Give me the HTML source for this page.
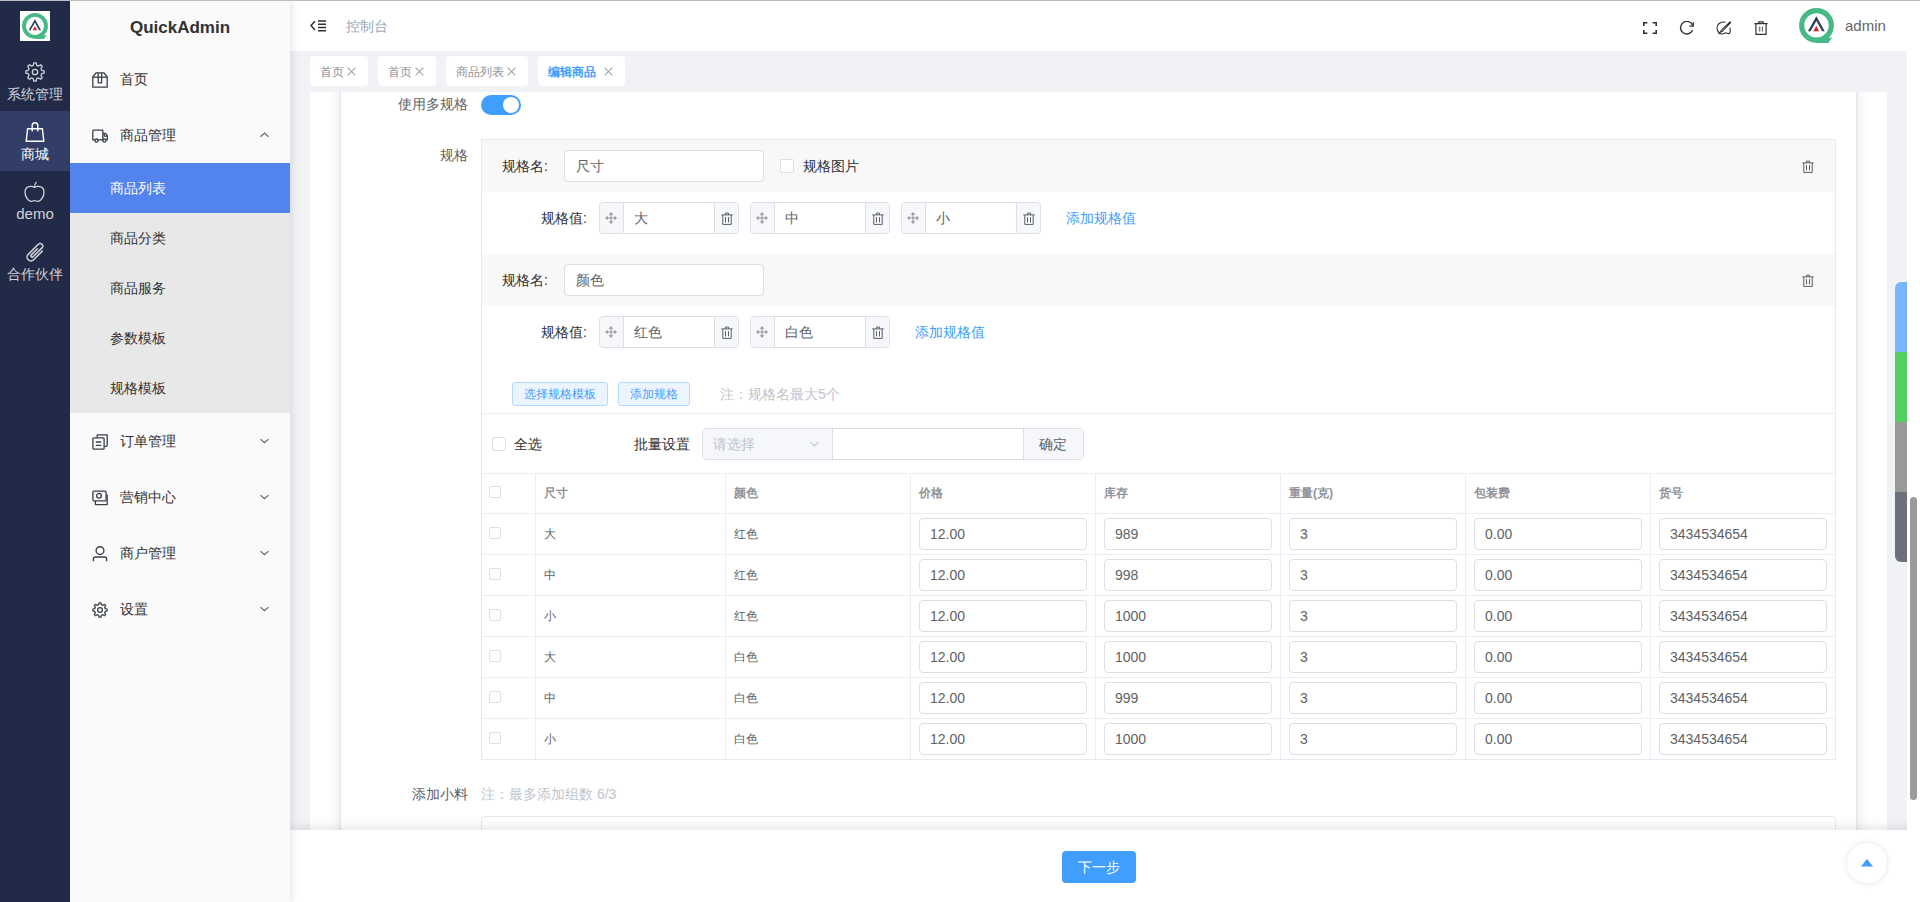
<!DOCTYPE html>
<html><head><meta charset="utf-8">
<style>*{box-sizing:border-box;margin:0;padding:0}
html,body{width:1920px;height:902px;overflow:hidden;background:#fff;font-family:"Liberation Sans",sans-serif;color:#606266;font-size:14px}
.a{position:absolute}
svg{display:block}
</style></head><body>
<div class="a" style="left:0px;top:0px;width:1920px;height:1px;z-index:50;background:#bcbcbc"></div>
<div class="a" style="left:0px;top:1px;width:70px;height:901px;z-index:20;background:#212a46"></div>
<div class="a" style="left:20px;top:11px;width:30px;height:30px;z-index:21;background:#fff"></div>
<div class="a" style="left:22px;top:13px;z-index:22"><svg width="26" height="26" viewBox="0 0 35 35"><circle cx="17.5" cy="17.4" r="14.8" fill="none" stroke="#46b985" stroke-width="5.2"/><path d="M17.5 29.8 L33.2 29.8 L29.2 35 L17.5 35Z" fill="#46b985"/><path d="M17.4 8.3 L25.7 23.2 L23.1 23.2 L17.4 12.9 L11.5 23.2 L8.9 23.2Z" fill="#2c3e5c"/><path d="M17.3 17.8 L20.1 23.2 L14.4 23.2Z" fill="#e02020"/></svg></div>
<div class="a" style="left:0px;top:111px;width:70px;height:60px;z-index:21;background:#323e68"></div>
<div class="a" style="left:25px;top:62px;z-index:22"><svg width="20" height="20" viewBox="0 0 20 20" fill="none" stroke="#d0d3da" stroke-width="1.3" stroke-linejoin="round"><path d="M8.28 3.30 L8.78 0.93 L11.22 0.93 L11.72 3.30 L13.52 4.04 L15.55 2.73 L17.27 4.45 L15.96 6.48 L16.70 8.28 L19.07 8.78 L19.07 11.22 L16.70 11.72 L15.96 13.52 L17.27 15.55 L15.55 17.27 L13.52 15.96 L11.72 16.70 L11.22 19.07 L8.78 19.07 L8.28 16.70 L6.48 15.96 L4.45 17.27 L2.73 15.55 L4.04 13.52 L3.30 11.72 L0.93 11.22 L0.93 8.78 L3.30 8.28 L4.04 6.48 L2.73 4.45 L4.45 2.73 L6.48 4.04Z"/><circle cx="10.0" cy="10.0" r="2.70"/></svg></div>
<div class="a" style="left:25px;top:122px;z-index:22"><svg width="20" height="20" viewBox="0 0 20 20" fill="none" stroke="#ffffff" stroke-width="1.4" stroke-linejoin="round"><path d="M2.6 6.8h14.8l1.4 12.4H1.2z"/><path d="M7.2 9.6V3.6a2.8 2.8 0 0 1 5.6 0v6"/></svg></div>
<div class="a" style="left:24px;top:181px;z-index:22"><svg width="21" height="21" viewBox="0 0 20 20" fill="none" stroke="#d0d3da" stroke-width="1.25" stroke-linejoin="round"><path d="M10 6.2C8 4.6 1 4.2 1 10.6c0 4.4 3 8.8 5.8 8.8 1.4 0 1.8-.7 3.2-.7s1.8.7 3.2.7c2.8 0 5.8-4.4 5.8-8.8 0-6.4-7-6-9-4.4z"/><path d="M10 6.2c0-2 .6-4 2-5.4"/></svg></div>
<div class="a" style="left:26px;top:242px;z-index:22"><svg width="20" height="20" viewBox="0 0 20 20" fill="none" stroke="#d0d3da" stroke-width="1.2" stroke-linecap="round"><g transform="rotate(45 10 10) translate(10 10) scale(1.28) translate(-10 -10)"><path d="M13 6V15.6a3 3 0 0 1-6 0V4.4a2 2 0 0 1 4 0V14.2a1 1 0 0 1-2 0V7.4"/></g></svg></div>
<div class="a" style="left:0px;top:85.0px;line-height:18px;font-size:14px;color:#d0d3da;white-space:nowrap;z-index:22;width:70px;text-align:center">系统管理</div>
<div class="a" style="left:0px;top:145.0px;line-height:18px;font-size:14px;color:#fff;white-space:nowrap;z-index:22;width:70px;text-align:center">商城</div>
<div class="a" style="left:0px;top:203.5px;line-height:19px;font-size:15px;color:#d0d3da;white-space:nowrap;z-index:22;width:70px;text-align:center">demo</div>
<div class="a" style="left:0px;top:265.0px;line-height:18px;font-size:14px;color:#d0d3da;white-space:nowrap;z-index:22;width:70px;text-align:center">合作伙伴</div>
<div class="a" style="left:70px;top:1px;width:220px;height:901px;z-index:15;background:#fafafa;box-shadow:2px 0 8px rgba(0,0,0,.10)"></div>
<div class="a" style="left:70px;top:16.5px;line-height:21px;font-size:17px;color:#303133;white-space:nowrap;z-index:16;width:220px;text-align:center;font-weight:bold">QuickAdmin</div>
<div class="a" style="left:70px;top:163px;width:220px;height:250px;z-index:16;background:#e8e8e8"></div>
<div class="a" style="left:70px;top:163px;width:220px;height:50px;z-index:16;background:#5383ec"></div>
<div class="a" style="left:92px;top:72px;z-index:17"><svg width="16" height="16" viewBox="0 0 16 16" fill="none" stroke="#3a4048" stroke-width="1.3" stroke-linejoin="round"><path d="M0.8 5L4 0.8h8L15.2 5V15.2H0.8z"/><path d="M0.8 5.2h14.4"/><path d="M6.2 0.8v10h3.4V0.8"/></svg></div>
<div class="a" style="left:120px;top:70.0px;line-height:18px;font-size:14px;color:#303133;white-space:nowrap;z-index:17;">首页</div>
<div class="a" style="left:92px;top:128px;z-index:17"><svg width="16" height="16" viewBox="0 0 16 16" fill="none" stroke="#3a4048" stroke-width="1.3" stroke-linejoin="round"><path d="M0.8 2.2h10v9.6M10.8 5.4h2.8l1.8 2.4v4h-1.4M3.2 11.8H0.8V2.2M5.8 11.8h5.6"/><circle cx="4.5" cy="12.6" r="1.6"/><circle cx="12.4" cy="12.6" r="1.6"/><path d="M12.2 5.6v2.6h3"/></svg></div>
<div class="a" style="left:120px;top:126.0px;line-height:18px;font-size:14px;color:#303133;white-space:nowrap;z-index:17;">商品管理</div>
<div class="a" style="left:260px;top:132px;z-index:17"><svg width="9" height="6" viewBox="0 0 9 5.5"><path d="M0.5 4.5L4.5 0.8L8.5 4.5" fill="none" stroke="#606266" stroke-width="1.1"/></svg></div>
<div class="a" style="left:92px;top:434px;z-index:17"><svg width="16" height="16" viewBox="0 0 16 16" fill="none" stroke="#3a4048" stroke-width="1.3" stroke-linejoin="round"><rect x="0.9" y="3.8" width="11.2" height="11.4" rx="1"/><path d="M5.2 3.6V0.9h10v10.4a1 1 0 0 1-1 1h-1.8"/><path d="M3.8 8h5.4M3.8 11.4h5.4"/></svg></div>
<div class="a" style="left:120px;top:432.0px;line-height:18px;font-size:14px;color:#303133;white-space:nowrap;z-index:17;">订单管理</div>
<div class="a" style="left:260px;top:438px;z-index:17"><svg width="9" height="6" viewBox="0 0 9 5.5"><path d="M0.5 0.8L4.5 4.5L8.5 0.8" fill="none" stroke="#606266" stroke-width="1.1"/></svg></div>
<div class="a" style="left:92px;top:490px;z-index:17"><svg width="16" height="16" viewBox="0 0 16 16" fill="none" stroke="#3a4048" stroke-width="1.3" stroke-linejoin="round"><rect x="0.9" y="1.2" width="13.2" height="9.6" rx="1"/><path d="M3.4 11v3.6h11.8V5.2h-1"/><circle cx="7" cy="5.8" r="2.4"/></svg></div>
<div class="a" style="left:120px;top:488.0px;line-height:18px;font-size:14px;color:#303133;white-space:nowrap;z-index:17;">营销中心</div>
<div class="a" style="left:260px;top:494px;z-index:17"><svg width="9" height="6" viewBox="0 0 9 5.5"><path d="M0.5 0.8L4.5 4.5L8.5 0.8" fill="none" stroke="#606266" stroke-width="1.1"/></svg></div>
<div class="a" style="left:92px;top:546px;z-index:17"><svg width="16" height="16" viewBox="0 0 16 16" fill="none" stroke="#3a4048" stroke-width="1.4"><circle cx="8" cy="4.6" r="3.9"/><path d="M1.4 15.2v-2.2a2 2 0 0 1 2-2h9.2a2 2 0 0 1 2 2v2.2"/></svg></div>
<div class="a" style="left:120px;top:544.0px;line-height:18px;font-size:14px;color:#303133;white-space:nowrap;z-index:17;">商户管理</div>
<div class="a" style="left:260px;top:550px;z-index:17"><svg width="9" height="6" viewBox="0 0 9 5.5"><path d="M0.5 0.8L4.5 4.5L8.5 0.8" fill="none" stroke="#606266" stroke-width="1.1"/></svg></div>
<div class="a" style="left:92px;top:602px;z-index:17"><svg width="16" height="16" viewBox="0 0 16 16" fill="none" stroke="#3a4048" stroke-width="1.3" stroke-linejoin="round"><path d="M6.65 2.73 L7.05 0.91 L8.95 0.91 L9.35 2.73 L10.77 3.32 L12.34 2.32 L13.68 3.66 L12.68 5.23 L13.27 6.65 L15.09 7.05 L15.09 8.95 L13.27 9.35 L12.68 10.77 L13.68 12.34 L12.34 13.68 L10.77 12.68 L9.35 13.27 L8.95 15.09 L7.05 15.09 L6.65 13.27 L5.23 12.68 L3.66 13.68 L2.32 12.34 L3.32 10.77 L2.73 9.35 L0.91 8.95 L0.91 7.05 L2.73 6.65 L3.32 5.23 L2.32 3.66 L3.66 2.32 L5.23 3.32Z"/><circle cx="8.0" cy="8.0" r="2.40"/></svg></div>
<div class="a" style="left:120px;top:600.0px;line-height:18px;font-size:14px;color:#303133;white-space:nowrap;z-index:17;">设置</div>
<div class="a" style="left:260px;top:606px;z-index:17"><svg width="9" height="6" viewBox="0 0 9 5.5"><path d="M0.5 0.8L4.5 4.5L8.5 0.8" fill="none" stroke="#606266" stroke-width="1.1"/></svg></div>
<div class="a" style="left:110px;top:179.0px;line-height:18px;font-size:14px;color:#fff;white-space:nowrap;z-index:17;">商品列表</div>
<div class="a" style="left:110px;top:229.0px;line-height:18px;font-size:14px;color:#303133;white-space:nowrap;z-index:17;">商品分类</div>
<div class="a" style="left:110px;top:279.0px;line-height:18px;font-size:14px;color:#303133;white-space:nowrap;z-index:17;">商品服务</div>
<div class="a" style="left:110px;top:329.0px;line-height:18px;font-size:14px;color:#303133;white-space:nowrap;z-index:17;">参数模板</div>
<div class="a" style="left:110px;top:379.0px;line-height:18px;font-size:14px;color:#303133;white-space:nowrap;z-index:17;">规格模板</div>
<div class="a" style="left:290px;top:1px;width:1630px;height:50px;z-index:10;background:#fff"></div>
<div class="a" style="left:310px;top:20px;z-index:11"><svg width="17" height="12" viewBox="0 0 17 12" fill="none" stroke="#303133" stroke-width="1.5"><path d="M5 1.2L1 5.6L5 10"/><path d="M8 1h8M8 4.2h8M8 7.4h8M8 10.8h8"/></svg></div>
<div class="a" style="left:346px;top:17.0px;line-height:18px;font-size:14px;color:#97a8be;white-space:nowrap;z-index:11;">控制台</div>
<div class="a" style="left:1643px;top:22px;z-index:11"><svg width="14" height="12" viewBox="0 0 14 12" fill="none" stroke="#303133" stroke-width="1.6"><path d="M0.8 4V0.8h3.6M9.6 0.8h3.6V4M13.2 8v3.2H9.6M4.4 11.2H0.8V8"/></svg></div>
<div class="a" style="left:1679px;top:21px;z-index:11"><svg width="15" height="14" viewBox="0 0 15 14" fill="none" stroke="#303133" stroke-width="1.4"><path d="M13.8 4.6A6.3 6.3 0 1 0 13.6 9.2"/><path d="M14.2 1.2v3.9h-3.9" stroke-linejoin="miter"/></svg></div>
<div class="a" style="left:1716px;top:21px;z-index:11"><svg width="15" height="14" viewBox="0 0 15 14" fill="none" stroke="#303133" stroke-width="1.1" stroke-linejoin="round"><path d="M9.6 1.3C8.9 1.1 8.2 1 7.4 1 3.8 1 1 3.6 1 7c0 3.4 2.6 6 5.6 6 1.8 0 2.2-1.2 3.2-1.2 1.1 0 1.5.8 2.6.8 1.3 0 1.9-1.6 1.9-3.2 0-1-.3-1.9-.7-2.6"/><path d="M14 0.9L5.2 9.4l-.5 1.6 1.6-.5L14.6 1.5z"/><path d="M4.6 10.6L2.6 13.2"/></svg></div>
<div class="a" style="left:1754px;top:21px;z-index:11"><svg width="14" height="14" viewBox="0 0 14 14" fill="none" stroke="#303133" stroke-width="1.2"><path d="M0.4 2.6h13.2M4.8 2.4V0.9h4.4v1.5M1.9 2.8v10.5h10.2V2.8"/><path d="M5.6 5.4v5M8.4 5.4v5" stroke="#777" stroke-width="1.4"/></svg></div>
<div class="a" style="left:1799px;top:8px;z-index:11"><svg width="35" height="35" viewBox="0 0 35 35"><circle cx="17.5" cy="17.4" r="14.8" fill="none" stroke="#46b985" stroke-width="5.2"/><path d="M17.5 29.8 L33.2 29.8 L29.2 35 L17.5 35Z" fill="#46b985"/><path d="M17.4 8.3 L25.7 23.2 L23.1 23.2 L17.4 12.9 L11.5 23.2 L8.9 23.2Z" fill="#2c3e5c"/><path d="M17.3 17.8 L20.1 23.2 L14.4 23.2Z" fill="#e02020"/></svg></div>
<div class="a" style="left:1845px;top:15.5px;line-height:19px;font-size:15px;color:#666;white-space:nowrap;z-index:11;">admin</div>
<div class="a" style="left:290px;top:51px;width:1630px;height:41px;z-index:9;background:#f0f2f5"></div>
<div class="a" style="left:310px;top:56px;width:58px;height:30px;z-index:9;background:#fff;border-radius:4px"></div>
<div class="a" style="left:320px;top:64.0px;line-height:16px;font-size:12px;color:#909399;white-space:nowrap;z-index:9;">首页</div>
<div class="a" style="left:347px;top:67px;z-index:9"><svg width="9" height="9" viewBox="0 0 9 9"><path d="M0.6 0.6L8.4 8.4M8.4 0.6L0.6 8.4" stroke="#a0a3a9" stroke-width="1.1"/></svg></div>
<div class="a" style="left:378px;top:56px;width:58px;height:30px;z-index:9;background:#fff;border-radius:4px"></div>
<div class="a" style="left:388px;top:64.0px;line-height:16px;font-size:12px;color:#909399;white-space:nowrap;z-index:9;">首页</div>
<div class="a" style="left:415px;top:67px;z-index:9"><svg width="9" height="9" viewBox="0 0 9 9"><path d="M0.6 0.6L8.4 8.4M8.4 0.6L0.6 8.4" stroke="#a0a3a9" stroke-width="1.1"/></svg></div>
<div class="a" style="left:446px;top:56px;width:82px;height:30px;z-index:9;background:#fff;border-radius:4px"></div>
<div class="a" style="left:456px;top:64.0px;line-height:16px;font-size:12px;color:#909399;white-space:nowrap;z-index:9;">商品列表</div>
<div class="a" style="left:507px;top:67px;z-index:9"><svg width="9" height="9" viewBox="0 0 9 9"><path d="M0.6 0.6L8.4 8.4M8.4 0.6L0.6 8.4" stroke="#a0a3a9" stroke-width="1.1"/></svg></div>
<div class="a" style="left:538px;top:56px;width:87px;height:30px;z-index:9;background:#fff;border-radius:4px"></div>
<div class="a" style="left:548px;top:64.0px;line-height:16px;font-size:12px;color:#409eff;white-space:nowrap;z-index:9;font-weight:bold">编辑商品</div>
<div class="a" style="left:604px;top:67px;z-index:9"><svg width="9" height="9" viewBox="0 0 9 9"><path d="M0.6 0.6L8.4 8.4M8.4 0.6L0.6 8.4" stroke="#a0a3a9" stroke-width="1.1"/></svg></div>
<div class="a" style="left:290px;top:92px;width:1617px;height:738px;z-index:1;background:#f0f2f5"></div>
<div class="a" style="left:310px;top:92px;width:1577px;height:738px;z-index:2;background:#fff;overflow:hidden"></div>
<div class="a" style="left:310px;top:92px;width:1577px;height:738px;overflow:hidden;z-index:2"><div class="a" style="left:30px;top:-10px;width:1517px;height:800px;background:#fff;border:1px solid #e4e6ef;box-shadow:0 2px 12px rgba(0,0,0,.11)"></div></div>
<div class="a" style="left:1907px;top:51px;width:13px;height:779px;z-index:13;background:#fff"></div>
<div class="a" style="left:1910px;top:497px;width:7px;height:303px;z-index:13;background:#9b9b9b;border-radius:4px"></div>
<div class="a" style="left:1895px;top:282px;width:12px;height:70px;z-index:13;background:#79b4ff;border-top-left-radius:6px"></div>
<div class="a" style="left:1895px;top:352px;width:12px;height:70px;z-index:13;background:#54d062"></div>
<div class="a" style="left:1895px;top:422px;width:12px;height:70px;z-index:13;background:#999"></div>
<div class="a" style="left:1895px;top:492px;width:12px;height:70px;z-index:13;background:#6c7079;border-bottom-left-radius:6px"></div>
<div class="a" style="left:290px;top:830px;width:1630px;height:72px;z-index:12;background:#fff;box-shadow:0 -3px 10px rgba(0,0,0,.10)"></div>
<div class="a" style="left:1062px;top:851px;width:74px;height:32px;z-index:13;background:#409eff;border-radius:4px"></div>
<div class="a" style="left:1062px;top:858.0px;line-height:18px;font-size:14px;color:#fff;white-space:nowrap;z-index:14;width:74px;text-align:center">下一步</div>
<div class="a" style="left:1847px;top:843px;width:40px;height:40px;z-index:13;background:#fff;border-radius:50%;box-shadow:0 0 6px rgba(0,0,0,.12)"></div>
<div class="a" style="left:1861px;top:859px;z-index:14"><svg width="12" height="8" viewBox="0 0 12 8"><path d="M6 0L12 7.5H0Z" fill="#409eff"/></svg></div>
<div class="a" style="left:268px;width:200px;text-align:right;top:95.0px;line-height:18px;font-size:14px;color:#606266;white-space:nowrap;z-index:3;">使用多规格</div>
<div class="a" style="left:481px;top:95px;width:40px;height:20px;z-index:3;background:#409eff;border-radius:10px"></div>
<div class="a" style="left:503px;top:97px;width:16px;height:16px;z-index:3;background:#fff;border-radius:50%"></div>
<div class="a" style="left:268px;width:200px;text-align:right;top:146.0px;line-height:18px;font-size:14px;color:#606266;white-space:nowrap;z-index:3;">规格</div>
<div class="a" style="left:481px;top:139px;width:1355px;height:621px;z-index:3;border:1px solid #e8eaf1"></div>
<div class="a" style="left:482px;top:140px;width:1353px;height:52px;z-index:3;background:#f8f8f9"></div>
<div class="a" style="left:482px;top:254px;width:1353px;height:52px;z-index:3;background:#f8f8f9"></div>
<div class="a" style="left:502px;top:157.0px;line-height:18px;font-size:14px;color:#303133;white-space:nowrap;z-index:3;">规格名:</div>
<div class="a" style="left:564px;top:150px;width:200px;height:32px;z-index:3;background:#fff;border:1px solid #dcdfe6;border-radius:4px"></div>
<div class="a" style="left:576px;top:157.0px;line-height:18px;font-size:14px;color:#606266;white-space:nowrap;z-index:3;">尺寸</div>
<div class="a" style="left:1802px;top:160px;z-index:3"><svg width="12" height="13" viewBox="0 0 12 13" fill="none" stroke="#5a5e66" stroke-width="1.0" stroke-linejoin="miter"><path d="M0.3 2.9h11.4M4.5 2.8V1.1h3v1.7M1.8 3v9.4h8.4V3"/><path d="M4.5 5.2v5.2M7.5 5.2v5.2" stroke-width="1"/></svg></div>
<div class="a" style="left:780px;top:159px;width:14px;height:14px;z-index:3;border:1px solid #dcdfe6;border-radius:2px;background:#fff"></div>
<div class="a" style="left:803px;top:157.0px;line-height:18px;font-size:14px;color:#303133;white-space:nowrap;z-index:3;">规格图片</div>
<div class="a" style="left:541px;top:209.0px;line-height:18px;font-size:14px;color:#303133;white-space:nowrap;z-index:3;">规格值:</div>
<div class="a" style="left:599px;top:202px;width:140px;height:32px;z-index:3;background:#fff;border:1px solid #dcdfe6;border-radius:4px;overflow:hidden"></div>
<div class="a" style="left:600px;top:203px;width:24px;height:30px;z-index:3;background:#f5f7fa;border-right:1px solid #dcdfe6;border-radius:3px 0 0 3px"></div>
<div class="a" style="left:714px;top:203px;width:24px;height:30px;z-index:3;background:#f5f7fa;border-left:1px solid #dcdfe6;border-radius:0 3px 3px 0"></div>
<div class="a" style="left:605px;top:212px;z-index:3"><svg width="12" height="12" viewBox="0 0 12 12"><g stroke="#999" stroke-width="1.1" fill="none"><path d="M6 2v8M2 6h8"/></g><g fill="#999"><path d="M6 0L8.3 2.7H3.7Z"/><path d="M6 12L8.3 9.3H3.7Z"/><path d="M0 6L2.7 3.7V8.3Z"/><path d="M12 6L9.3 3.7V8.3Z"/></g></svg></div>
<div class="a" style="left:721px;top:212px;z-index:3"><svg width="12" height="13" viewBox="0 0 12 13" fill="none" stroke="#5a5e66" stroke-width="1.0" stroke-linejoin="miter"><path d="M0.3 2.9h11.4M4.5 2.8V1.1h3v1.7M1.8 3v9.4h8.4V3"/><path d="M4.5 5.2v5.2M7.5 5.2v5.2" stroke-width="1"/></svg></div>
<div class="a" style="left:634px;top:209.0px;line-height:18px;font-size:14px;color:#606266;white-space:nowrap;z-index:3;">大</div>
<div class="a" style="left:750px;top:202px;width:140px;height:32px;z-index:3;background:#fff;border:1px solid #dcdfe6;border-radius:4px;overflow:hidden"></div>
<div class="a" style="left:751px;top:203px;width:24px;height:30px;z-index:3;background:#f5f7fa;border-right:1px solid #dcdfe6;border-radius:3px 0 0 3px"></div>
<div class="a" style="left:865px;top:203px;width:24px;height:30px;z-index:3;background:#f5f7fa;border-left:1px solid #dcdfe6;border-radius:0 3px 3px 0"></div>
<div class="a" style="left:756px;top:212px;z-index:3"><svg width="12" height="12" viewBox="0 0 12 12"><g stroke="#999" stroke-width="1.1" fill="none"><path d="M6 2v8M2 6h8"/></g><g fill="#999"><path d="M6 0L8.3 2.7H3.7Z"/><path d="M6 12L8.3 9.3H3.7Z"/><path d="M0 6L2.7 3.7V8.3Z"/><path d="M12 6L9.3 3.7V8.3Z"/></g></svg></div>
<div class="a" style="left:872px;top:212px;z-index:3"><svg width="12" height="13" viewBox="0 0 12 13" fill="none" stroke="#5a5e66" stroke-width="1.0" stroke-linejoin="miter"><path d="M0.3 2.9h11.4M4.5 2.8V1.1h3v1.7M1.8 3v9.4h8.4V3"/><path d="M4.5 5.2v5.2M7.5 5.2v5.2" stroke-width="1"/></svg></div>
<div class="a" style="left:785px;top:209.0px;line-height:18px;font-size:14px;color:#606266;white-space:nowrap;z-index:3;">中</div>
<div class="a" style="left:901px;top:202px;width:140px;height:32px;z-index:3;background:#fff;border:1px solid #dcdfe6;border-radius:4px;overflow:hidden"></div>
<div class="a" style="left:902px;top:203px;width:24px;height:30px;z-index:3;background:#f5f7fa;border-right:1px solid #dcdfe6;border-radius:3px 0 0 3px"></div>
<div class="a" style="left:1016px;top:203px;width:24px;height:30px;z-index:3;background:#f5f7fa;border-left:1px solid #dcdfe6;border-radius:0 3px 3px 0"></div>
<div class="a" style="left:907px;top:212px;z-index:3"><svg width="12" height="12" viewBox="0 0 12 12"><g stroke="#999" stroke-width="1.1" fill="none"><path d="M6 2v8M2 6h8"/></g><g fill="#999"><path d="M6 0L8.3 2.7H3.7Z"/><path d="M6 12L8.3 9.3H3.7Z"/><path d="M0 6L2.7 3.7V8.3Z"/><path d="M12 6L9.3 3.7V8.3Z"/></g></svg></div>
<div class="a" style="left:1023px;top:212px;z-index:3"><svg width="12" height="13" viewBox="0 0 12 13" fill="none" stroke="#5a5e66" stroke-width="1.0" stroke-linejoin="miter"><path d="M0.3 2.9h11.4M4.5 2.8V1.1h3v1.7M1.8 3v9.4h8.4V3"/><path d="M4.5 5.2v5.2M7.5 5.2v5.2" stroke-width="1"/></svg></div>
<div class="a" style="left:936px;top:209.0px;line-height:18px;font-size:14px;color:#606266;white-space:nowrap;z-index:3;">小</div>
<div class="a" style="left:1066px;top:209.0px;line-height:18px;font-size:14px;color:#409eff;white-space:nowrap;z-index:3;">添加规格值</div>
<div class="a" style="left:502px;top:271.0px;line-height:18px;font-size:14px;color:#303133;white-space:nowrap;z-index:3;">规格名:</div>
<div class="a" style="left:564px;top:264px;width:200px;height:32px;z-index:3;background:#fff;border:1px solid #dcdfe6;border-radius:4px"></div>
<div class="a" style="left:576px;top:271.0px;line-height:18px;font-size:14px;color:#606266;white-space:nowrap;z-index:3;">颜色</div>
<div class="a" style="left:1802px;top:274px;z-index:3"><svg width="12" height="13" viewBox="0 0 12 13" fill="none" stroke="#5a5e66" stroke-width="1.0" stroke-linejoin="miter"><path d="M0.3 2.9h11.4M4.5 2.8V1.1h3v1.7M1.8 3v9.4h8.4V3"/><path d="M4.5 5.2v5.2M7.5 5.2v5.2" stroke-width="1"/></svg></div>
<div class="a" style="left:541px;top:323.0px;line-height:18px;font-size:14px;color:#303133;white-space:nowrap;z-index:3;">规格值:</div>
<div class="a" style="left:599px;top:316px;width:140px;height:32px;z-index:3;background:#fff;border:1px solid #dcdfe6;border-radius:4px;overflow:hidden"></div>
<div class="a" style="left:600px;top:317px;width:24px;height:30px;z-index:3;background:#f5f7fa;border-right:1px solid #dcdfe6;border-radius:3px 0 0 3px"></div>
<div class="a" style="left:714px;top:317px;width:24px;height:30px;z-index:3;background:#f5f7fa;border-left:1px solid #dcdfe6;border-radius:0 3px 3px 0"></div>
<div class="a" style="left:605px;top:326px;z-index:3"><svg width="12" height="12" viewBox="0 0 12 12"><g stroke="#999" stroke-width="1.1" fill="none"><path d="M6 2v8M2 6h8"/></g><g fill="#999"><path d="M6 0L8.3 2.7H3.7Z"/><path d="M6 12L8.3 9.3H3.7Z"/><path d="M0 6L2.7 3.7V8.3Z"/><path d="M12 6L9.3 3.7V8.3Z"/></g></svg></div>
<div class="a" style="left:721px;top:326px;z-index:3"><svg width="12" height="13" viewBox="0 0 12 13" fill="none" stroke="#5a5e66" stroke-width="1.0" stroke-linejoin="miter"><path d="M0.3 2.9h11.4M4.5 2.8V1.1h3v1.7M1.8 3v9.4h8.4V3"/><path d="M4.5 5.2v5.2M7.5 5.2v5.2" stroke-width="1"/></svg></div>
<div class="a" style="left:634px;top:323.0px;line-height:18px;font-size:14px;color:#606266;white-space:nowrap;z-index:3;">红色</div>
<div class="a" style="left:750px;top:316px;width:140px;height:32px;z-index:3;background:#fff;border:1px solid #dcdfe6;border-radius:4px;overflow:hidden"></div>
<div class="a" style="left:751px;top:317px;width:24px;height:30px;z-index:3;background:#f5f7fa;border-right:1px solid #dcdfe6;border-radius:3px 0 0 3px"></div>
<div class="a" style="left:865px;top:317px;width:24px;height:30px;z-index:3;background:#f5f7fa;border-left:1px solid #dcdfe6;border-radius:0 3px 3px 0"></div>
<div class="a" style="left:756px;top:326px;z-index:3"><svg width="12" height="12" viewBox="0 0 12 12"><g stroke="#999" stroke-width="1.1" fill="none"><path d="M6 2v8M2 6h8"/></g><g fill="#999"><path d="M6 0L8.3 2.7H3.7Z"/><path d="M6 12L8.3 9.3H3.7Z"/><path d="M0 6L2.7 3.7V8.3Z"/><path d="M12 6L9.3 3.7V8.3Z"/></g></svg></div>
<div class="a" style="left:872px;top:326px;z-index:3"><svg width="12" height="13" viewBox="0 0 12 13" fill="none" stroke="#5a5e66" stroke-width="1.0" stroke-linejoin="miter"><path d="M0.3 2.9h11.4M4.5 2.8V1.1h3v1.7M1.8 3v9.4h8.4V3"/><path d="M4.5 5.2v5.2M7.5 5.2v5.2" stroke-width="1"/></svg></div>
<div class="a" style="left:785px;top:323.0px;line-height:18px;font-size:14px;color:#606266;white-space:nowrap;z-index:3;">白色</div>
<div class="a" style="left:915px;top:323.0px;line-height:18px;font-size:14px;color:#409eff;white-space:nowrap;z-index:3;">添加规格值</div>
<div class="a" style="left:512px;top:382px;width:96px;height:24px;z-index:3;background:#ecf5ff;border:1px solid #b3d8ff;border-radius:3px"></div>
<div class="a" style="left:512px;top:386.0px;line-height:16px;font-size:12px;color:#409eff;white-space:nowrap;z-index:3;width:96px;text-align:center">选择规格模板</div>
<div class="a" style="left:618px;top:382px;width:72px;height:24px;z-index:3;background:#ecf5ff;border:1px solid #b3d8ff;border-radius:3px"></div>
<div class="a" style="left:618px;top:386.0px;line-height:16px;font-size:12px;color:#409eff;white-space:nowrap;z-index:3;width:72px;text-align:center">添加规格</div>
<div class="a" style="left:720px;top:385.0px;line-height:18px;font-size:14px;color:#c0c4cc;white-space:nowrap;z-index:3;">注：规格名最大5个</div>
<div class="a" style="left:482px;top:413px;width:1353px;height:1px;z-index:3;background:#ebeef5"></div>
<div class="a" style="left:492px;top:437px;width:14px;height:14px;z-index:3;border:1px solid #dcdfe6;border-radius:2px;background:#fff"></div>
<div class="a" style="left:514px;top:435.0px;line-height:18px;font-size:14px;color:#303133;white-space:nowrap;z-index:3;">全选</div>
<div class="a" style="left:634px;top:435.0px;line-height:18px;font-size:14px;color:#303133;white-space:nowrap;z-index:3;">批量设置</div>
<div class="a" style="left:702px;top:428px;width:382px;height:32px;z-index:3;border:1px solid #dcdfe6;border-radius:4px;background:#fff;overflow:hidden"></div>
<div class="a" style="left:703px;top:429px;width:130px;height:30px;z-index:3;background:#f5f7fa;border-right:1px solid #dcdfe6"></div>
<div class="a" style="left:1023px;top:429px;width:60px;height:30px;z-index:3;background:#f5f7fa;border-left:1px solid #dcdfe6"></div>
<div class="a" style="left:713px;top:435.0px;line-height:18px;font-size:14px;color:#c0c4cc;white-space:nowrap;z-index:3;">请选择</div>
<div class="a" style="left:810px;top:441px;z-index:3"><svg width="9" height="6" viewBox="0 0 9 5.5"><path d="M0.5 0.8L4.5 4.5L8.5 0.8" fill="none" stroke="#c0c4cc" stroke-width="1.1"/></svg></div>
<div class="a" style="left:1023px;top:435.0px;line-height:18px;font-size:14px;color:#606266;white-space:nowrap;z-index:3;width:60px;text-align:center">确定</div>
<div class="a" style="left:482px;top:473px;width:1353px;height:1px;z-index:3;background:#ebeef5"></div>
<div class="a" style="left:544px;top:485.0px;line-height:16px;font-size:12px;color:#909399;white-space:nowrap;z-index:3;font-weight:bold">尺寸</div>
<div class="a" style="left:734px;top:485.0px;line-height:16px;font-size:12px;color:#909399;white-space:nowrap;z-index:3;font-weight:bold">颜色</div>
<div class="a" style="left:919px;top:485.0px;line-height:16px;font-size:12px;color:#909399;white-space:nowrap;z-index:3;font-weight:bold">价格</div>
<div class="a" style="left:1104px;top:485.0px;line-height:16px;font-size:12px;color:#909399;white-space:nowrap;z-index:3;font-weight:bold">库存</div>
<div class="a" style="left:1289px;top:485.0px;line-height:16px;font-size:12px;color:#909399;white-space:nowrap;z-index:3;font-weight:bold">重量(克)</div>
<div class="a" style="left:1474px;top:485.0px;line-height:16px;font-size:12px;color:#909399;white-space:nowrap;z-index:3;font-weight:bold">包装费</div>
<div class="a" style="left:1659px;top:485.0px;line-height:16px;font-size:12px;color:#909399;white-space:nowrap;z-index:3;font-weight:bold">货号</div>
<div class="a" style="left:535px;top:473px;width:1px;height:286px;z-index:3;background:#ebeef5"></div>
<div class="a" style="left:725px;top:473px;width:1px;height:286px;z-index:3;background:#ebeef5"></div>
<div class="a" style="left:910px;top:473px;width:1px;height:286px;z-index:3;background:#ebeef5"></div>
<div class="a" style="left:1095px;top:473px;width:1px;height:286px;z-index:3;background:#ebeef5"></div>
<div class="a" style="left:1280px;top:473px;width:1px;height:286px;z-index:3;background:#ebeef5"></div>
<div class="a" style="left:1465px;top:473px;width:1px;height:286px;z-index:3;background:#ebeef5"></div>
<div class="a" style="left:1650px;top:473px;width:1px;height:286px;z-index:3;background:#ebeef5"></div>
<div class="a" style="left:489px;top:486px;width:12px;height:12px;z-index:3;border:1px solid #dcdfe6;border-radius:2px;background:#fff"></div>
<div class="a" style="left:482px;top:513px;width:1353px;height:1px;z-index:3;background:#ebeef5"></div>
<div class="a" style="left:489px;top:527px;width:12px;height:12px;z-index:3;border:1px solid #dcdfe6;border-radius:2px;background:#fff"></div>
<div class="a" style="left:544px;top:526.0px;line-height:16px;font-size:12px;color:#606266;white-space:nowrap;z-index:3;">大</div>
<div class="a" style="left:734px;top:526.0px;line-height:16px;font-size:12px;color:#606266;white-space:nowrap;z-index:3;">红色</div>
<div class="a" style="left:919px;top:518px;width:168px;height:32px;z-index:3;background:#fff;border:1px solid #dcdfe6;border-radius:4px"></div>
<div class="a" style="left:930px;top:525.0px;line-height:18px;font-size:14px;color:#606266;white-space:nowrap;z-index:3;">12.00</div>
<div class="a" style="left:1104px;top:518px;width:168px;height:32px;z-index:3;background:#fff;border:1px solid #dcdfe6;border-radius:4px"></div>
<div class="a" style="left:1115px;top:525.0px;line-height:18px;font-size:14px;color:#606266;white-space:nowrap;z-index:3;">989</div>
<div class="a" style="left:1289px;top:518px;width:168px;height:32px;z-index:3;background:#fff;border:1px solid #dcdfe6;border-radius:4px"></div>
<div class="a" style="left:1300px;top:525.0px;line-height:18px;font-size:14px;color:#606266;white-space:nowrap;z-index:3;">3</div>
<div class="a" style="left:1474px;top:518px;width:168px;height:32px;z-index:3;background:#fff;border:1px solid #dcdfe6;border-radius:4px"></div>
<div class="a" style="left:1485px;top:525.0px;line-height:18px;font-size:14px;color:#606266;white-space:nowrap;z-index:3;">0.00</div>
<div class="a" style="left:1659px;top:518px;width:168px;height:32px;z-index:3;background:#fff;border:1px solid #dcdfe6;border-radius:4px"></div>
<div class="a" style="left:1670px;top:525.0px;line-height:18px;font-size:14px;color:#606266;white-space:nowrap;z-index:3;">3434534654</div>
<div class="a" style="left:482px;top:554px;width:1353px;height:1px;z-index:3;background:#ebeef5"></div>
<div class="a" style="left:489px;top:568px;width:12px;height:12px;z-index:3;border:1px solid #dcdfe6;border-radius:2px;background:#fff"></div>
<div class="a" style="left:544px;top:567.0px;line-height:16px;font-size:12px;color:#606266;white-space:nowrap;z-index:3;">中</div>
<div class="a" style="left:734px;top:567.0px;line-height:16px;font-size:12px;color:#606266;white-space:nowrap;z-index:3;">红色</div>
<div class="a" style="left:919px;top:559px;width:168px;height:32px;z-index:3;background:#fff;border:1px solid #dcdfe6;border-radius:4px"></div>
<div class="a" style="left:930px;top:566.0px;line-height:18px;font-size:14px;color:#606266;white-space:nowrap;z-index:3;">12.00</div>
<div class="a" style="left:1104px;top:559px;width:168px;height:32px;z-index:3;background:#fff;border:1px solid #dcdfe6;border-radius:4px"></div>
<div class="a" style="left:1115px;top:566.0px;line-height:18px;font-size:14px;color:#606266;white-space:nowrap;z-index:3;">998</div>
<div class="a" style="left:1289px;top:559px;width:168px;height:32px;z-index:3;background:#fff;border:1px solid #dcdfe6;border-radius:4px"></div>
<div class="a" style="left:1300px;top:566.0px;line-height:18px;font-size:14px;color:#606266;white-space:nowrap;z-index:3;">3</div>
<div class="a" style="left:1474px;top:559px;width:168px;height:32px;z-index:3;background:#fff;border:1px solid #dcdfe6;border-radius:4px"></div>
<div class="a" style="left:1485px;top:566.0px;line-height:18px;font-size:14px;color:#606266;white-space:nowrap;z-index:3;">0.00</div>
<div class="a" style="left:1659px;top:559px;width:168px;height:32px;z-index:3;background:#fff;border:1px solid #dcdfe6;border-radius:4px"></div>
<div class="a" style="left:1670px;top:566.0px;line-height:18px;font-size:14px;color:#606266;white-space:nowrap;z-index:3;">3434534654</div>
<div class="a" style="left:482px;top:595px;width:1353px;height:1px;z-index:3;background:#ebeef5"></div>
<div class="a" style="left:489px;top:609px;width:12px;height:12px;z-index:3;border:1px solid #dcdfe6;border-radius:2px;background:#fff"></div>
<div class="a" style="left:544px;top:608.0px;line-height:16px;font-size:12px;color:#606266;white-space:nowrap;z-index:3;">小</div>
<div class="a" style="left:734px;top:608.0px;line-height:16px;font-size:12px;color:#606266;white-space:nowrap;z-index:3;">红色</div>
<div class="a" style="left:919px;top:600px;width:168px;height:32px;z-index:3;background:#fff;border:1px solid #dcdfe6;border-radius:4px"></div>
<div class="a" style="left:930px;top:607.0px;line-height:18px;font-size:14px;color:#606266;white-space:nowrap;z-index:3;">12.00</div>
<div class="a" style="left:1104px;top:600px;width:168px;height:32px;z-index:3;background:#fff;border:1px solid #dcdfe6;border-radius:4px"></div>
<div class="a" style="left:1115px;top:607.0px;line-height:18px;font-size:14px;color:#606266;white-space:nowrap;z-index:3;">1000</div>
<div class="a" style="left:1289px;top:600px;width:168px;height:32px;z-index:3;background:#fff;border:1px solid #dcdfe6;border-radius:4px"></div>
<div class="a" style="left:1300px;top:607.0px;line-height:18px;font-size:14px;color:#606266;white-space:nowrap;z-index:3;">3</div>
<div class="a" style="left:1474px;top:600px;width:168px;height:32px;z-index:3;background:#fff;border:1px solid #dcdfe6;border-radius:4px"></div>
<div class="a" style="left:1485px;top:607.0px;line-height:18px;font-size:14px;color:#606266;white-space:nowrap;z-index:3;">0.00</div>
<div class="a" style="left:1659px;top:600px;width:168px;height:32px;z-index:3;background:#fff;border:1px solid #dcdfe6;border-radius:4px"></div>
<div class="a" style="left:1670px;top:607.0px;line-height:18px;font-size:14px;color:#606266;white-space:nowrap;z-index:3;">3434534654</div>
<div class="a" style="left:482px;top:636px;width:1353px;height:1px;z-index:3;background:#ebeef5"></div>
<div class="a" style="left:489px;top:650px;width:12px;height:12px;z-index:3;border:1px solid #dcdfe6;border-radius:2px;background:#fff"></div>
<div class="a" style="left:544px;top:649.0px;line-height:16px;font-size:12px;color:#606266;white-space:nowrap;z-index:3;">大</div>
<div class="a" style="left:734px;top:649.0px;line-height:16px;font-size:12px;color:#606266;white-space:nowrap;z-index:3;">白色</div>
<div class="a" style="left:919px;top:641px;width:168px;height:32px;z-index:3;background:#fff;border:1px solid #dcdfe6;border-radius:4px"></div>
<div class="a" style="left:930px;top:648.0px;line-height:18px;font-size:14px;color:#606266;white-space:nowrap;z-index:3;">12.00</div>
<div class="a" style="left:1104px;top:641px;width:168px;height:32px;z-index:3;background:#fff;border:1px solid #dcdfe6;border-radius:4px"></div>
<div class="a" style="left:1115px;top:648.0px;line-height:18px;font-size:14px;color:#606266;white-space:nowrap;z-index:3;">1000</div>
<div class="a" style="left:1289px;top:641px;width:168px;height:32px;z-index:3;background:#fff;border:1px solid #dcdfe6;border-radius:4px"></div>
<div class="a" style="left:1300px;top:648.0px;line-height:18px;font-size:14px;color:#606266;white-space:nowrap;z-index:3;">3</div>
<div class="a" style="left:1474px;top:641px;width:168px;height:32px;z-index:3;background:#fff;border:1px solid #dcdfe6;border-radius:4px"></div>
<div class="a" style="left:1485px;top:648.0px;line-height:18px;font-size:14px;color:#606266;white-space:nowrap;z-index:3;">0.00</div>
<div class="a" style="left:1659px;top:641px;width:168px;height:32px;z-index:3;background:#fff;border:1px solid #dcdfe6;border-radius:4px"></div>
<div class="a" style="left:1670px;top:648.0px;line-height:18px;font-size:14px;color:#606266;white-space:nowrap;z-index:3;">3434534654</div>
<div class="a" style="left:482px;top:677px;width:1353px;height:1px;z-index:3;background:#ebeef5"></div>
<div class="a" style="left:489px;top:691px;width:12px;height:12px;z-index:3;border:1px solid #dcdfe6;border-radius:2px;background:#fff"></div>
<div class="a" style="left:544px;top:690.0px;line-height:16px;font-size:12px;color:#606266;white-space:nowrap;z-index:3;">中</div>
<div class="a" style="left:734px;top:690.0px;line-height:16px;font-size:12px;color:#606266;white-space:nowrap;z-index:3;">白色</div>
<div class="a" style="left:919px;top:682px;width:168px;height:32px;z-index:3;background:#fff;border:1px solid #dcdfe6;border-radius:4px"></div>
<div class="a" style="left:930px;top:689.0px;line-height:18px;font-size:14px;color:#606266;white-space:nowrap;z-index:3;">12.00</div>
<div class="a" style="left:1104px;top:682px;width:168px;height:32px;z-index:3;background:#fff;border:1px solid #dcdfe6;border-radius:4px"></div>
<div class="a" style="left:1115px;top:689.0px;line-height:18px;font-size:14px;color:#606266;white-space:nowrap;z-index:3;">999</div>
<div class="a" style="left:1289px;top:682px;width:168px;height:32px;z-index:3;background:#fff;border:1px solid #dcdfe6;border-radius:4px"></div>
<div class="a" style="left:1300px;top:689.0px;line-height:18px;font-size:14px;color:#606266;white-space:nowrap;z-index:3;">3</div>
<div class="a" style="left:1474px;top:682px;width:168px;height:32px;z-index:3;background:#fff;border:1px solid #dcdfe6;border-radius:4px"></div>
<div class="a" style="left:1485px;top:689.0px;line-height:18px;font-size:14px;color:#606266;white-space:nowrap;z-index:3;">0.00</div>
<div class="a" style="left:1659px;top:682px;width:168px;height:32px;z-index:3;background:#fff;border:1px solid #dcdfe6;border-radius:4px"></div>
<div class="a" style="left:1670px;top:689.0px;line-height:18px;font-size:14px;color:#606266;white-space:nowrap;z-index:3;">3434534654</div>
<div class="a" style="left:482px;top:718px;width:1353px;height:1px;z-index:3;background:#ebeef5"></div>
<div class="a" style="left:489px;top:732px;width:12px;height:12px;z-index:3;border:1px solid #dcdfe6;border-radius:2px;background:#fff"></div>
<div class="a" style="left:544px;top:731.0px;line-height:16px;font-size:12px;color:#606266;white-space:nowrap;z-index:3;">小</div>
<div class="a" style="left:734px;top:731.0px;line-height:16px;font-size:12px;color:#606266;white-space:nowrap;z-index:3;">白色</div>
<div class="a" style="left:919px;top:723px;width:168px;height:32px;z-index:3;background:#fff;border:1px solid #dcdfe6;border-radius:4px"></div>
<div class="a" style="left:930px;top:730.0px;line-height:18px;font-size:14px;color:#606266;white-space:nowrap;z-index:3;">12.00</div>
<div class="a" style="left:1104px;top:723px;width:168px;height:32px;z-index:3;background:#fff;border:1px solid #dcdfe6;border-radius:4px"></div>
<div class="a" style="left:1115px;top:730.0px;line-height:18px;font-size:14px;color:#606266;white-space:nowrap;z-index:3;">1000</div>
<div class="a" style="left:1289px;top:723px;width:168px;height:32px;z-index:3;background:#fff;border:1px solid #dcdfe6;border-radius:4px"></div>
<div class="a" style="left:1300px;top:730.0px;line-height:18px;font-size:14px;color:#606266;white-space:nowrap;z-index:3;">3</div>
<div class="a" style="left:1474px;top:723px;width:168px;height:32px;z-index:3;background:#fff;border:1px solid #dcdfe6;border-radius:4px"></div>
<div class="a" style="left:1485px;top:730.0px;line-height:18px;font-size:14px;color:#606266;white-space:nowrap;z-index:3;">0.00</div>
<div class="a" style="left:1659px;top:723px;width:168px;height:32px;z-index:3;background:#fff;border:1px solid #dcdfe6;border-radius:4px"></div>
<div class="a" style="left:1670px;top:730.0px;line-height:18px;font-size:14px;color:#606266;white-space:nowrap;z-index:3;">3434534654</div>
<div class="a" style="left:268px;width:200px;text-align:right;top:785.0px;line-height:18px;font-size:14px;color:#606266;white-space:nowrap;z-index:3;">添加小料</div>
<div class="a" style="left:481px;top:785.0px;line-height:18px;font-size:14px;color:#c0c4cc;white-space:nowrap;z-index:3;">注：最多添加组数 6/3</div>
<div class="a" style="left:481px;top:816px;width:1355px;height:60px;z-index:3;border:1px solid #e4e7ed;border-radius:4px"></div>
</body></html>
